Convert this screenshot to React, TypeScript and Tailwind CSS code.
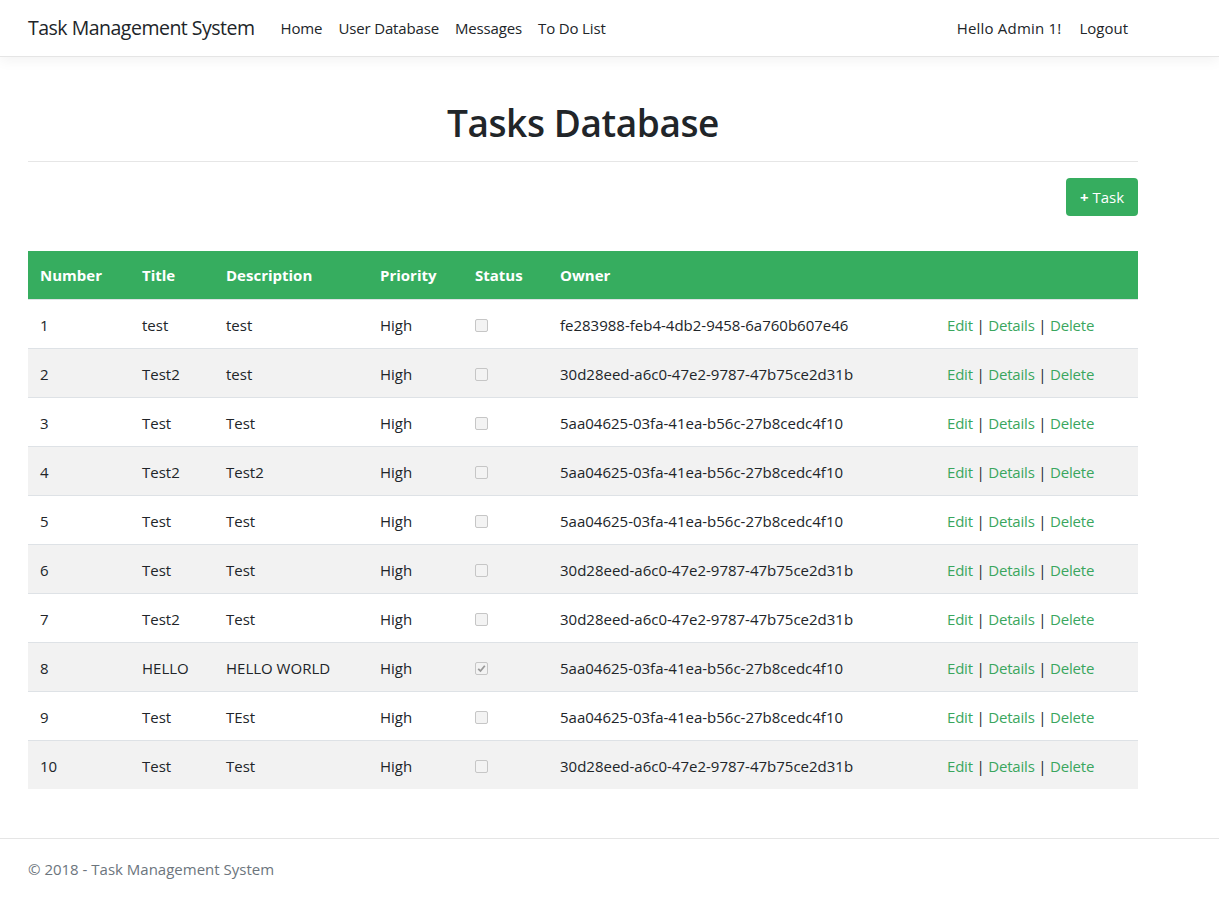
import React from "react";

const rows = [
  ["1", "test", "test", "High", false, "fe283988-feb4-4db2-9458-6a760b607e46"],
  ["2", "Test2", "test", "High", false, "30d28eed-a6c0-47e2-9787-47b75ce2d31b"],
  ["3", "Test", "Test", "High", false, "5aa04625-03fa-41ea-b56c-27b8cedc4f10"],
  ["4", "Test2", "Test2", "High", false, "5aa04625-03fa-41ea-b56c-27b8cedc4f10"],
  ["5", "Test", "Test", "High", false, "5aa04625-03fa-41ea-b56c-27b8cedc4f10"],
  ["6", "Test", "Test", "High", false, "30d28eed-a6c0-47e2-9787-47b75ce2d31b"],
  ["7", "Test2", "Test", "High", false, "30d28eed-a6c0-47e2-9787-47b75ce2d31b"],
  ["8", "HELLO", "HELLO WORLD", "High", true, "5aa04625-03fa-41ea-b56c-27b8cedc4f10"],
  ["9", "Test", "TEst", "High", false, "5aa04625-03fa-41ea-b56c-27b8cedc4f10"],
  ["10", "Test", "Test", "High", false, "30d28eed-a6c0-47e2-9787-47b75ce2d31b"],
] as const;

function Box({ checked }: { checked: boolean }) {
  return (
    <span className="inline-flex w-[13px] h-[13px] items-center justify-center rounded-[2px] border border-[#c6c6c6] bg-[#f3f3f3] align-middle">
      {checked && (
        <svg width="9" height="9" viewBox="0 0 9 9">
          <path d="M1.2 4.8 L3.5 7 L7.8 1.8" fill="none" stroke="#9a9a9a" strokeWidth="1.8" />
        </svg>
      )}
    </span>
  );
}

export default function App() {
  return (
    <div className="min-h-[899px] bg-white text-[#212529] font-['Open_Sans',sans-serif] text-[16px] leading-6 flex flex-col">
      <nav className="h-[57px] border-b border-[#e5e5e5] shadow-[0_4px_12px_rgba(0,0,0,0.05)] flex items-center">
        <div className="w-[1110px] ml-[28px] flex items-center">
          <span className="text-[19.5px] text-[#212529] mr-[18px] tracking-[-0.5px]">Task Management System</span>
          <div className="flex text-[15px] text-[#212529] tracking-[-0.15px]">
            <span className="px-2">Home</span>
            <span className="px-2">User Database</span>
            <span className="px-2">Messages</span>
            <span className="px-2">To Do List</span>
          </div>
          <div className="ml-auto flex text-[15px] mr-[2px]">
            <span className="px-2 text-[#212529] tracking-[0.2px]">Hello Admin 1!</span>
            <span className="pl-[10px] pr-2 text-[#212529]">Logout</span>
          </div>
        </div>
      </nav>

      <main className="w-[1110px] ml-[28px] flex-1">
        <h1 className="text-center text-[37px] leading-[48px] font-semibold mt-[42px] tracking-[-0.4px]">Tasks Database</h1>
        <hr className="mt-[14px] border-t border-[#e6e6e6]" />
        <div className="flex justify-end mt-[16px]">
          <button className="h-[38px] w-[72px] rounded-[4px] bg-[#36ad5f] text-white text-[15px] flex items-center justify-center">
            <span className="font-bold mr-[4px]">+</span>Task
          </button>
        </div>
        <table className="mt-[35px] w-full border-collapse text-[15px]">
          <thead>
            <tr className="bg-[#36ad5f] text-white h-[48px] text-left">
              <th className="w-[102px] pl-[12px] font-bold">Number</th>
              <th className="w-[84px] pl-[12px] font-bold">Title</th>
              <th className="w-[154px] pl-[12px] font-bold">Description</th>
              <th className="w-[95px] pl-[12px] font-bold">Priority</th>
              <th className="w-[85px] pl-[12px] font-bold">Status</th>
              <th className="w-[387px] pl-[12px] font-bold">Owner</th>
              <th></th>
            </tr>
          </thead>
          <tbody>
            {rows.map((r, i) => (
              <tr key={i} className={`h-[49px] border-t border-[#dee2e6] ${i % 2 === 1 ? "bg-[#f2f2f2]" : "bg-white"}`}>
                <td className="pl-[12px] pt-[2px]">{r[0]}</td>
                <td className="pl-[12px] pt-[2px]">{r[1]}</td>
                <td className="pl-[12px] pt-[2px]">{r[2]}</td>
                <td className="pl-[12px] pt-[2px]">{r[3]}</td>
                <td className="pl-[12px]"><Box checked={r[4]} /></td>
                <td className="pl-[12px] pt-[2px]">{r[5]}</td>
                <td className="pl-[12px] pt-[2px] tracking-[-0.2px]">
                  <span className="text-[#3aa65e]">Edit</span> | <span className="text-[#3aa65e]">Details</span> | <span className="text-[#3aa65e]">Delete</span>
                </td>
              </tr>
            ))}
          </tbody>
        </table>
      </main>

      <footer className="mt-[48px] border-t border-[#e5e5e5] h-[61px] pt-[18px]">
        <div className="ml-[28px] text-[#6c757d] text-[15px]">© 2018 - Task Management System</div>
      </footer>
    </div>
  );
}
